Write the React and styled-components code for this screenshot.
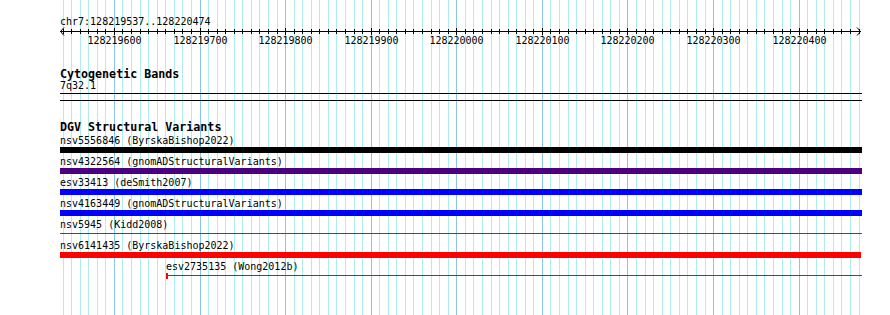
import React from "react";
import styled, { createGlobalStyle } from "styled-components";

const START = 128219537;
const END = 128220474;
const LEFT = 60;
const WIDTH = 802;
const SCALE = WIDTH / (END - START);
const toX = bp => (bp - START) * SCALE;

const features = [
  { label: "nsv5556846 (ByrskaBishop2022)", color: "#000000", thick: true },
  { label: "nsv4322564 (gnomADStructuralVariants)", color: "#4b0082", thick: true },
  { label: "esv33413 (deSmith2007)", color: "#0000ff", thick: true },
  { label: "nsv4163449 (gnomADStructuralVariants)", color: "#0000ff", thick: true },
  { label: "nsv5945 (Kidd2008)", color: "#ff0000", thick: false },
  { label: "nsv6141435 (ByrskaBishop2022)", color: "#ff0000", thick: true, trim: 1 },
  { label: "esv2735135 (Wong2012b)", color: "#ff0000", thick: false, start: 128219661, cap: true },
];

function gridStops() {
  const stops = [];
  for (let bp = Math.ceil(START / 10) * 10; bp <= END; bp += 10) {
    stops.push({ bp, x: Math.round(toX(bp)), major: bp % 100 === 0 });
  }
  return stops;
}

function App() {
  const stops = gridStops();

  return (
    <>
      <GlobalStyle />
      <Panel>
        <Grid width="890" height="315">
          {stops.map(s => (
            <line
              key={s.bp}
              x1={LEFT + s.x + 0.5}
              x2={LEFT + s.x + 0.5}
              y1="0"
              y2="315"
              stroke={s.major ? "#87c6ea" : "#afeeee"}
              strokeWidth="1"
            />
          ))}
        </Grid>

        <Tracks>
          <ChrLabel>chr7:128219537..128220474</ChrLabel>
          <Ruler width={WIDTH} height="20">
            <line x1="0" x2={WIDTH - 1} y1="4.5" y2="4.5" stroke="#000" />
            <polyline points="4,0.5 0.5,4.5 4,8.5" fill="none" stroke="#000" />
            <polyline points={`${WIDTH - 5},0.5 ${WIDTH - 1.5},4.5 ${WIDTH - 5},8.5`} fill="none" stroke="#000" />
            {stops.map(s => (
              <line
                key={s.bp}
                x1={s.x + 0.5}
                x2={s.x + 0.5}
                y1={s.major ? 1 : 2}
                y2={s.major ? 8 : 7}
                stroke="#000"
              />
            ))}
            {stops
              .filter(s => s.major)
              .map(s => (
                <TickText key={s.bp} x={s.x + 0.5} y="17" textAnchor="middle">
                  {s.bp}
                </TickText>
              ))}
          </Ruler>

          <SectionTitle $top={21}>Cytogenetic Bands</SectionTitle>
          <FeatureLabel>7q32.1</FeatureLabel>
          <BandBox />

          <SectionTitle $top={20}>DGV Structural Variants</SectionTitle>
          <FeatureList>
            {features.map(f => {
              const offset = f.start ? Math.round(toX(f.start)) : 0;
              return (
                <FeatureRow key={f.label} style={{ paddingLeft: offset, paddingRight: f.trim || 0 }}>
                  <FeatureLabel $row>{f.label}</FeatureLabel>
                  <Glyph>
                    {f.cap && <Cap $color={f.color} />}
                    <Stroke $color={f.color} $thick={f.thick} />
                  </Glyph>
                </FeatureRow>
              );
            })}
          </FeatureList>
        </Tracks>
      </Panel>
    </>
  );
}

const GlobalStyle = createGlobalStyle`
  html, body {
    margin: 0;
    padding: 0;
    background: #ffffff;
  }
  body {
    font-family: "DejaVu Sans Mono", "Liberation Mono", monospace;
    color: #000;
  }
`;

const Panel = styled.div`
  position: relative;
  width: 890px;
  height: 315px;
  overflow: hidden;
  background: #ffffff;
`;

const Grid = styled.svg`
  position: absolute;
  left: 0;
  top: 0;
  display: block;
`;

const Tracks = styled.div`
  position: relative;
  width: ${WIDTH}px;
  padding-left: ${LEFT}px;
  display: flex;
  flex-direction: column;
`;

const ChrLabel = styled.div`
  margin-top: 17px;
  font-size: 10px;
  line-height: 10px;
  height: 10px;
  white-space: nowrap;
`;

const Ruler = styled.svg`
  display: block;
  overflow: visible;
`;

const TickText = styled.text`
  font-family: "DejaVu Sans Mono", "Liberation Mono", monospace;
  font-size: 10px;
  fill: #000;
`;

const SectionTitle = styled.div`
  margin-top: ${p => p.$top}px;
  font-size: 11.67px;
  font-weight: bold;
  line-height: 13px;
  height: 13px;
  white-space: nowrap;
`;

const FeatureLabel = styled.div`
  font-size: 10px;
  line-height: ${p => (p.$row ? 12 : 10)}px;
  height: ${p => (p.$row ? 12 : 10)}px;
  white-space: nowrap;
`;

const BandBox = styled.div`
  margin-top: 2px;
  height: 6px;
  border-top: 1px solid #000;
  border-bottom: 1px solid #000;
`;

const FeatureList = styled.div`
  margin-top: 1px;
  display: flex;
  flex-direction: column;
`;

const FeatureRow = styled.div`
  display: flex;
  flex-direction: column;
  height: 21px;
`;

const Glyph = styled.div`
  display: flex;
  align-items: flex-start;
  height: 6px;
`;

const Cap = styled.div`
  width: 2px;
  height: 6px;
  background: ${p => p.$color};
`;

const Stroke = styled.div`
  flex: 1;
  height: ${p => (p.$thick ? 6 : 1)}px;
  margin-top: ${p => (p.$thick ? 0 : 2)}px;
  background: ${p => p.$color};
`;

export default App;
